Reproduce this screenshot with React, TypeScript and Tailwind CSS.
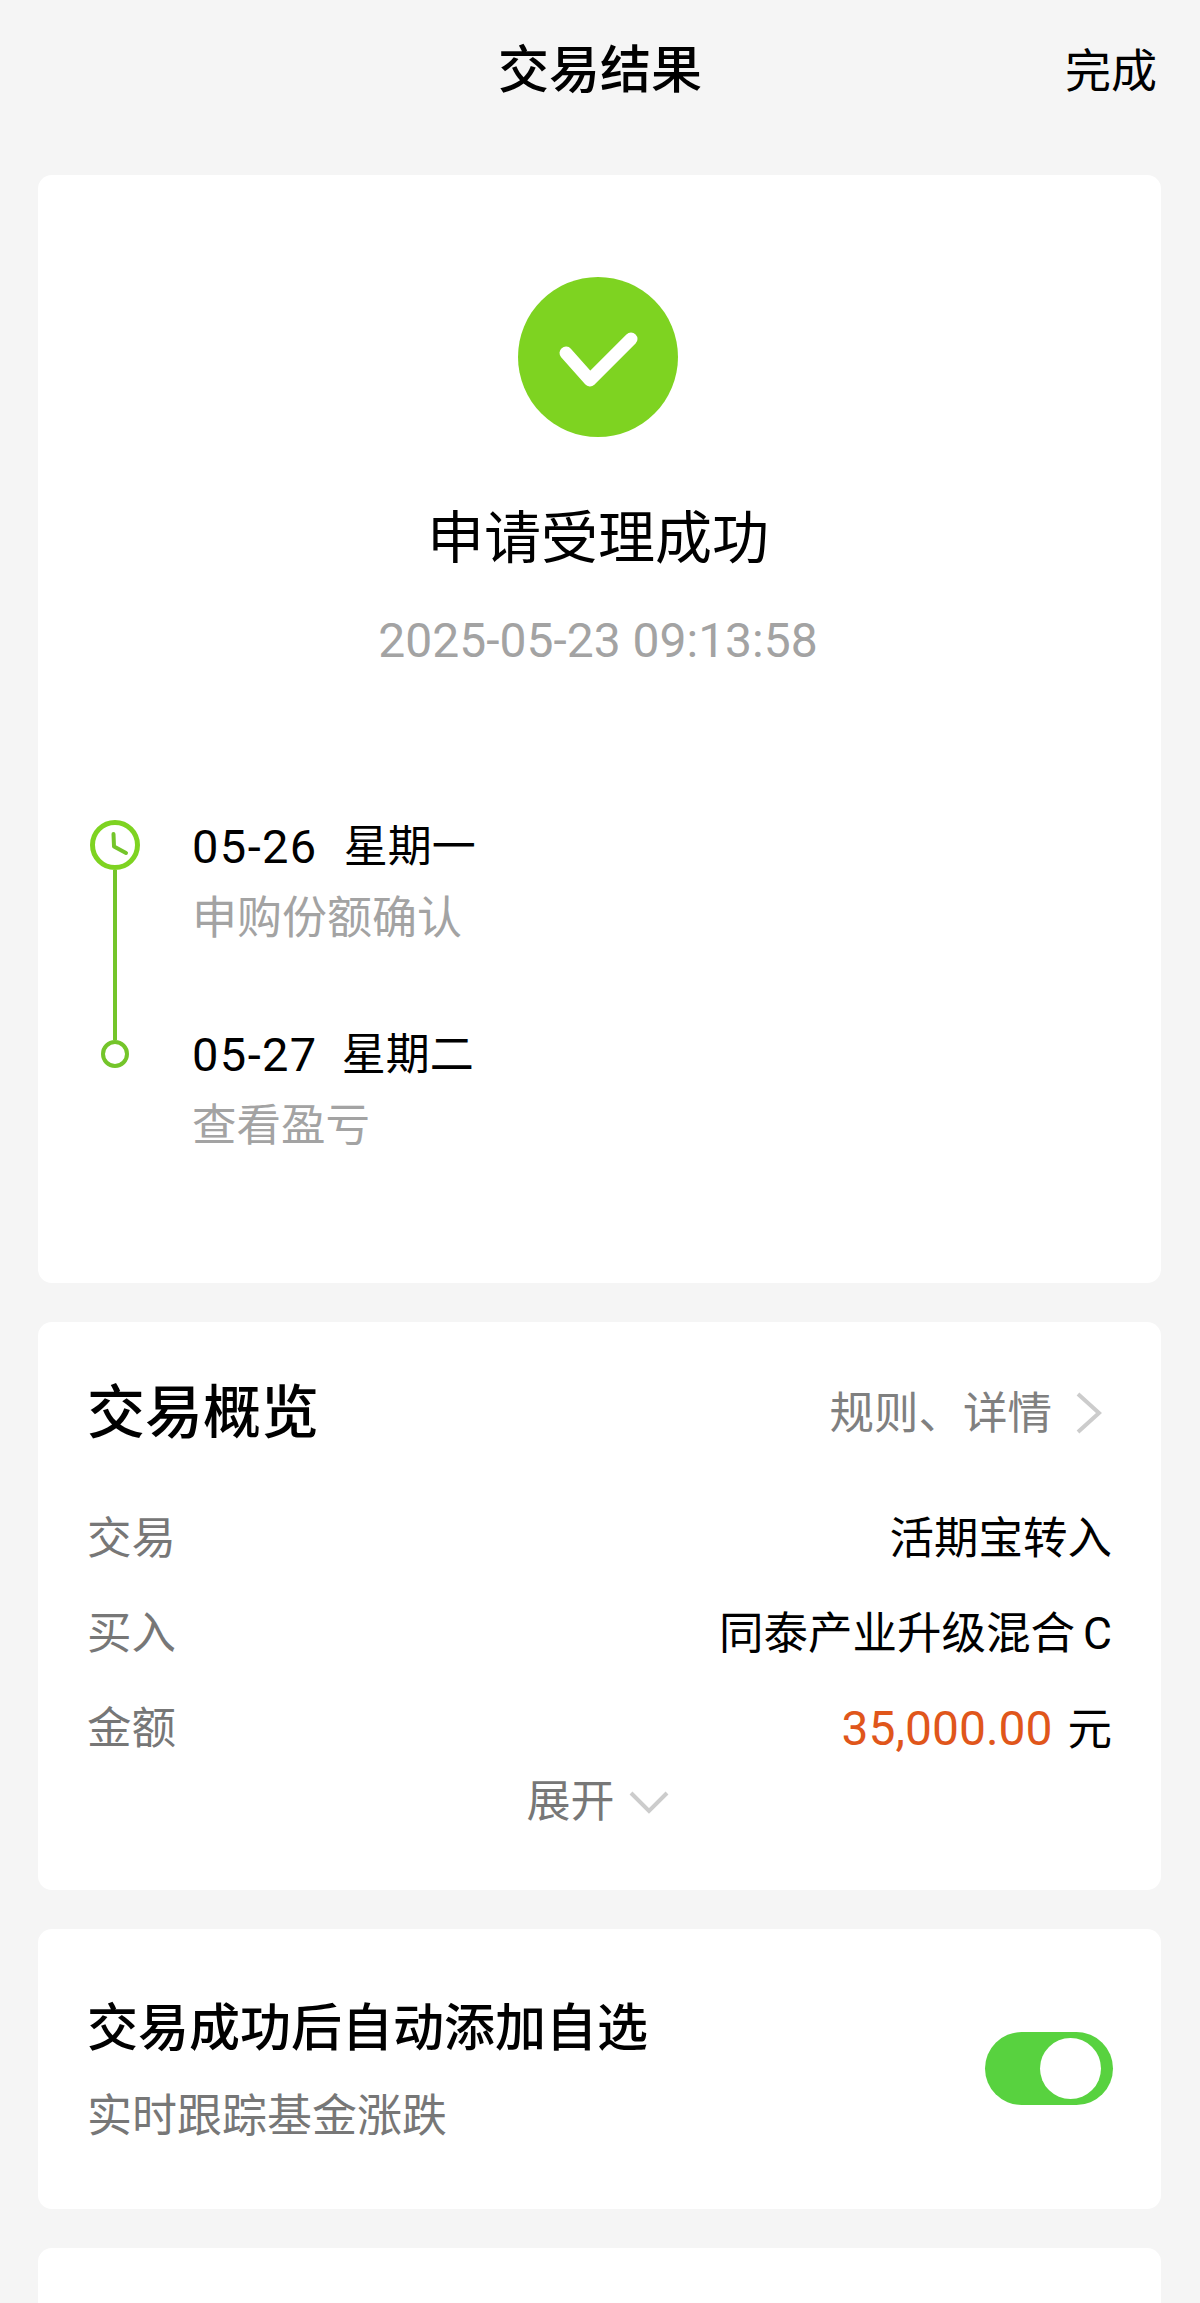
const cjk = "font-['Roboto','Noto_Sans_CJK_SC',sans-serif]";

function Row({ label, children }: { label: string; children: React.ReactNode }) {
  return (
    <div className="flex h-[95px] items-center justify-between pt-[5px]">
      <span className="text-[44.5px] text-[#777777]">{label}</span>
      <span className="flex items-baseline text-[44.5px] text-black">{children}</span>
    </div>
  );
}

function ClockIcon() {
  return (
    <svg width="50" height="50" viewBox="0 0 50 50" fill="none" className="shrink-0">
      <circle cx="25" cy="25" r="22.5" stroke="#7ed321" strokeWidth="5" />
      <path d="M23.5 14 L24 26.5 L36 33" stroke="#74c52a" strokeWidth="4" strokeLinecap="round" strokeLinejoin="round" />
    </svg>
  );
}

export default function App() {
  return (
    <div className={`${cjk} h-[2303px] overflow-hidden bg-[#f5f5f5]`}>
      {/* Header */}
      <div className="grid h-[140px] grid-cols-3 items-center px-[43px] pt-[2px]">
        <div />
        <div className="text-center text-[51px] font-medium text-black">交易结果</div>
        <div className="text-right text-[46px] text-black">完成</div>
      </div>

      <div className="ml-[38px] mr-[39px] mt-[35px] flex flex-col gap-[39px]">
        {/* Result */}
        <div className="h-[1108px] rounded-[14px] bg-white pt-[102px]">
          <div className="flex flex-col items-center pr-[3px]">
            <div className="flex h-[160px] w-[160px] items-center justify-center rounded-full bg-[#7ed321]">
              <svg width="160" height="160" viewBox="0 0 160 160" fill="none">
                <path d="M48 76 L72 103 L113 62" stroke="#ffffff" strokeWidth="13" strokeLinecap="round" strokeLinejoin="round" />
              </svg>
            </div>
            <div className="mt-[62px] text-[57px] leading-[80px] text-black">申请受理成功</div>
            <div className="mt-[32px] text-[48px] leading-[60px] text-[#a3a3a3]">2025-05-23 09:13:58</div>
          </div>

          <div className="mt-[145px] flex pl-[52px]">
            <div className="flex w-[50px] flex-col items-center pt-[4px]">
              <ClockIcon />
              <div className="h-[170px] w-[4px] bg-[#74c52a]" />
              <div className="h-[28px] w-[28px] rounded-full border-[4px] border-[#74c52a]" />
            </div>
            <div className="ml-[52px] flex flex-col pt-[1px]">
              <div className="flex h-[60px] items-center gap-[26px] text-[44px] text-black">
                <span className="text-[47px] tracking-[1.4px]">05-26</span>
                <span>星期一</span>
              </div>
              <div className="mt-[12px] h-[60px] text-[45px] leading-[60px] text-[#a3a3a3]">申购份额确认</div>
              <div className="mt-[76px] flex h-[60px] items-center gap-[24px] text-[44px] text-black">
                <span className="text-[47px] tracking-[1.4px]">05-27</span>
                <span>星期二</span>
              </div>
              <div className="mt-[11px] h-[60px] text-[44.5px] leading-[60px] text-[#a3a3a3]">查看盈亏</div>
            </div>
          </div>
        </div>

        {/* Overview */}
        <div className="h-[568px] rounded-[14px] bg-white pl-[49px] pr-[49px] pt-[48px]">
          <div className="flex h-[86px] items-center justify-between">
            <span className="text-[58px] font-medium text-black">交易概览</span>
            <span className="mr-[8px] flex items-center gap-[22px] text-[44.5px] text-[#808080]">
              <span className="pt-[2px]">规则、详情</span>
              <svg width="30" height="44" viewBox="0 0 30 44" fill="none">
                <path d="M4 3 L25 22 L4 41" stroke="#cccccc" strokeWidth="4" />
              </svg>
            </span>
          </div>
          <div className="mt-[33px] flex flex-col">
            <Row label="交易">活期宝转入</Row>
            <Row label="买入">
              同泰产业升级混合<span className="ml-[8px]">C</span>
            </Row>
            <Row label="金额">
              <span className="text-[48px] text-[#e0561b]">35,000.00</span>
              <span className="ml-[15px]">元</span>
            </Row>
          </div>
          <div className="-mt-[2px] flex h-[60px] items-center justify-center gap-[14px] pr-[4px] text-[44px] text-[#777777]">
            展开
            <svg width="40" height="24" viewBox="0 0 40 24" fill="none">
              <path d="M2 3 L20 21 L38 3" stroke="#cccccc" strokeWidth="4" />
            </svg>
          </div>
        </div>

        {/* Auto add */}
        <div className="flex h-[280px] items-center justify-between rounded-[14px] bg-white pl-[49px] pr-[48px]">
          <div className="flex flex-col gap-[28px] pt-[7px]">
            <span className="text-[51px] font-medium leading-[60px] text-black">交易成功后自动添加自选</span>
            <span className="text-[45px] leading-[60px] text-[#777777]">实时跟踪基金涨跌</span>
          </div>
          <div className="-mt-[2px] flex h-[73px] w-[128px] items-center justify-end rounded-full bg-[#58d23f] pr-[12px]">
            <div className="h-[61px] w-[61px] rounded-full bg-white" />
          </div>
        </div>

        <div className="h-[200px] rounded-[14px] bg-white" />
      </div>
    </div>
  );
}
